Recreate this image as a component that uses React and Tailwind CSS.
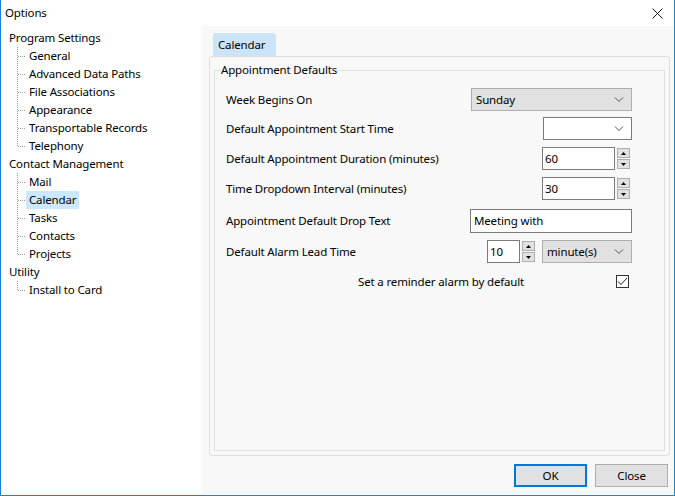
import React from "react";

const TREE = [
  { label: "Program Settings", children: ["General", "Advanced Data Paths", "File Associations", "Appearance", "Transportable Records", "Telephony"] },
  { label: "Contact Management", children: ["Mail", "Calendar", "Tasks", "Contacts", "Projects"] },
  { label: "Utility", children: ["Install to Card"] },
];

const Connector = ({ last }) => (
  <svg width="9" height="18" className="shrink-0">
    <line x1="0.5" y1="0" x2="0.5" y2={last ? 9 : 18} stroke="#a0a0a0" strokeDasharray="1 1" />
    <line x1="1" y1="9.5" x2="9" y2="9.5" stroke="#a0a0a0" strokeDasharray="1 1" />
  </svg>
);

const Chevron = () => (
  <svg width="10" height="6" viewBox="0 0 10 6" className="shrink-0">
    <polyline points="1,0.5 5,4.5 9,0.5" fill="none" stroke="#505050" strokeWidth="1" />
  </svg>
);

const Dropdown = ({ value, w, white }) => (
  <div
    className={`flex h-[23px] items-center justify-between border pl-[4px] pr-[7px] ${w} ${
      white ? "border-[#7a7a7a] bg-white" : "border-[#adadad] bg-[#e1e1e1]"
    }`}
  >
    <span>{value}</span>
    <Chevron />
  </div>
);

const Arrow = ({ up }) => (
  <div className="flex h-[10px] w-[13px] items-center justify-center border border-[#adadad] bg-[#e1e1e1]">
    <svg width="5" height="3" viewBox="0 0 5 3">
      <polygon points={up ? "0,3 5,3 2.5,0" : "0,0 5,0 2.5,3"} fill="#000" />
    </svg>
  </div>
);

const Spin = ({ value, w }) => (
  <div className="flex items-center gap-[2px]">
    <div className={`flex h-[23px] items-center border border-[#7a7a7a] bg-white pl-[2px] ${w}`}>{value}</div>
    <div className="flex flex-col gap-[1px]">
      <Arrow up />
      <Arrow />
    </div>
  </div>
);

const Row = ({ label, children, mt }) => (
  <div className={`flex h-[23px] items-center justify-between ${mt}`}>
    <span>{label}</span>
    {children}
  </div>
);

export default function App() {
  return (
    <div className="flex h-[496px] w-[675px] flex-col border-x border-b border-[#1883d7] bg-[#f8f8f8] font-['Noto_Sans',sans-serif] text-[11.5px] leading-[16px] tracking-[-0.15px] text-black">
      <div className="flex h-[26px] shrink-0 items-center justify-between bg-white pl-[4px] pr-[11px]">
        <span>Options</span>
        <svg width="11" height="11" viewBox="0 0 11 11">
          <path d="M0.5 0.5 L10.5 10.5 M10.5 0.5 L0.5 10.5" stroke="#111" strokeWidth="1" />
        </svg>
      </div>
      <div className="flex min-h-0 flex-1">
        <div className="mb-[2px] w-[201px] shrink-0 bg-white pl-[8px] pt-[3px]">
          {TREE.map((g) => (
            <div key={g.label}>
              <div className="flex h-[18px] items-center">{g.label}</div>
              <div className="pl-[8px]">
                {g.children.map((c, i) => (
                  <div key={c} className="flex h-[18px] items-center">
                    <Connector last={i === g.children.length - 1} />
                    <span className={`px-[3px] leading-[18px] ${c === "Calendar" ? "bg-[#cce8ff]" : ""}`}>{c}</span>
                  </div>
                ))}
              </div>
            </div>
          ))}
        </div>
        <div className="flex flex-1 flex-col pl-[7px] pr-[4px] pt-[7px]">
          <div className="flex">
            <div className="ml-[4px] flex h-[23px] w-[63px] items-center rounded-t-[3px] bg-[#cce4f7] pl-[5px]">Calendar</div>
          </div>
          <div className="flex h-[400px] flex-col rounded-[3px] border border-[#dedede] px-[4px] pb-[4px] pt-[5px]">
            <fieldset className="flex-1 border border-[#e0e0e0] pl-[11px] pr-[32px]">
              <legend className="-ml-[5px] px-0">Appointment Defaults</legend>
              <Row label="Week Begins On" mt="mt-[10px]">
                <Dropdown value="Sunday" w="w-[161px]" />
              </Row>
              <Row label="Default Appointment Start Time" mt="mt-[6px]">
                <Dropdown value="" w="w-[89px]" white />
              </Row>
              <Row label="Default Appointment Duration (minutes)" mt="mt-[7px]">
                <div className="mr-[2px]">
                  <Spin value="60" w="w-[73px]" />
                </div>
              </Row>
              <Row label="Time Dropdown Interval (minutes)" mt="mt-[7px]">
                <div className="mr-[2px]">
                  <Spin value="30" w="w-[73px]" />
                </div>
              </Row>
              <Row label="Appointment Default Drop Text" mt="mt-[9px]">
                <div className="flex h-[24px] w-[162px] items-center border border-[#7a7a7a] bg-white pl-[3px]">Meeting with</div>
              </Row>
              <Row label="Default Alarm Lead Time" mt="mt-[8px]">
                <div className="flex items-center gap-[7px]">
                  <Spin value="10" w="w-[33px]" />
                  <Dropdown value="minute(s)" w="w-[90px]" />
                </div>
              </Row>
              <div className="mt-[7px] flex h-[23px] items-center pl-[132px] pr-[3px]">
                <span>Set a reminder alarm by default</span>
                <div className="ml-auto flex h-[13px] w-[13px] items-center justify-center border border-[#333] bg-white">
                  <svg width="11" height="9" viewBox="0 0 11 9">
                    <polyline points="1,4.5 4,7.5 10,1" fill="none" stroke="#222" strokeWidth="1" />
                  </svg>
                </div>
              </div>
            </fieldset>
          </div>
          <div className="flex flex-1 items-center justify-end gap-[8px] pr-[2px]">
            <button className="h-[23px] w-[73px] border-2 border-[#0078d7] bg-[#e1e1e1]">OK</button>
            <button className="h-[23px] w-[73px] border border-[#adadad] bg-[#e1e1e1]">Close</button>
          </div>
        </div>
      </div>
    </div>
  );
}
